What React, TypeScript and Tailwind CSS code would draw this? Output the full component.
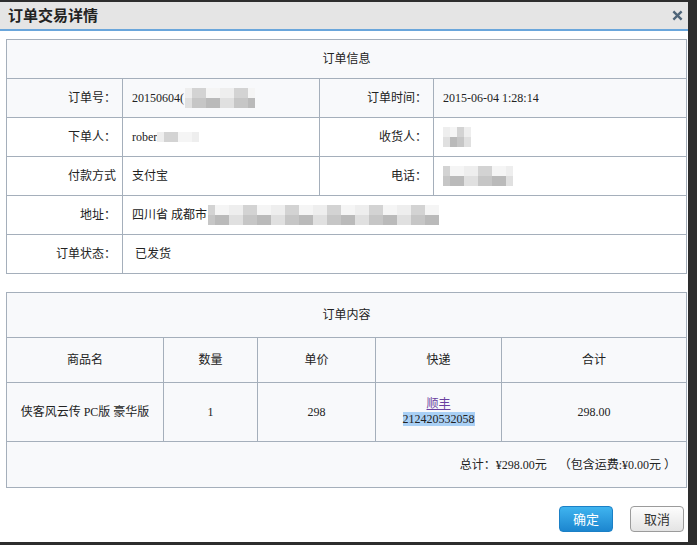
import React from "react";

const SHADES = [
  "bg-[#eeeeee]",
  "bg-[#e0e0e0]",
  "bg-[#d3d3d3]",
  "bg-[#c6c6c6]",
  "bg-[#f5f5f5]",
  "bg-[#bababa]",
];

type MosaicProps = { cols: number; rows: number; seed: number };

// pixelated blur used to hide personal data
const Mosaic = ({ cols, rows, seed }: MosaicProps) => (
  <span className="inline-flex flex-col align-middle">
    {Array.from({ length: rows }).map((_, r) => (
      <span key={r} className="flex">
        {Array.from({ length: cols }).map((__, c) => {
          const idx = (c * 7 + r * 3 + seed * 5 + ((c * c + seed) % 4)) % SHADES.length;
          const shade = r === rows - 1 && rows > 1 ? SHADES[(idx + 4) % SHADES.length] : SHADES[idx];
          return <span key={c} className={`h-[10px] w-[7px] ${shade}`} />;
        })}
      </span>
    ))}
  </span>
);

const cell = "border border-[#a5afbb] text-[12px] text-[#222]";
const label = `${cell} text-right pr-[6px]`;
const value = `${cell} text-left pl-[9px]`;

const InfoTable = () => (
  <table className="w-[680px] table-fixed border-collapse">
    <colgroup>
      <col className="w-[116px]" />
      <col className="w-[197px]" />
      <col className="w-[114px]" />
      <col className="w-[253px]" />
    </colgroup>
    <tbody>
      <tr className="h-[39px] bg-[#f8f9fb]">
        <td colSpan={4} className={`${cell} text-center`}>订单信息</td>
      </tr>
      <tr className="h-[39px] bg-[#f8f9fb]">
        <td className={label}>订单号：</td>
        <td className={value}>
          <span className="inline-flex items-center">
            20150604(
            <span className="ml-[1px]"><Mosaic cols={10} rows={2} seed={1} /></span>
          </span>
        </td>
        <td className={label}>订单时间：</td>
        <td className={value}>2015-06-04 1:28:14</td>
      </tr>
      <tr className="h-[39px] bg-white">
        <td className={label}>下单人：</td>
        <td className={value}>
          <span className="inline-flex items-center">
            rober
            <Mosaic cols={6} rows={1} seed={2} />
          </span>
        </td>
        <td className={label}>收货人：</td>
        <td className={value}>
          <Mosaic cols={4} rows={2} seed={3} />
        </td>
      </tr>
      <tr className="h-[39px] bg-white">
        <td className={label}>付款方式</td>
        <td className={value}>支付宝</td>
        <td className={label}>电话：</td>
        <td className={value}>
          <Mosaic cols={10} rows={2} seed={4} />
        </td>
      </tr>
      <tr className="h-[39px] bg-white">
        <td className={label}>地址：</td>
        <td colSpan={3} className={value}>
          <span className="inline-flex items-center">
            四川省 成都市
            <span className="ml-[1px]"><Mosaic cols={33} rows={2} seed={5} /></span>
          </span>
        </td>
      </tr>
      <tr className="h-[39px] bg-white">
        <td className={label}>订单状态：</td>
        <td colSpan={3} className={`${value} pl-[12px]`}>已发货</td>
      </tr>
    </tbody>
  </table>
);

const ContentTable = () => (
  <table className="w-[680px] table-fixed border-collapse bg-[#f8f9fb]">
    <colgroup>
      <col className="w-[157px]" />
      <col className="w-[94px]" />
      <col className="w-[118px]" />
      <col className="w-[126px]" />
      <col className="w-[185px]" />
    </colgroup>
    <tbody>
      <tr className="h-[45px]">
        <td colSpan={5} className={`${cell} text-center`}>订单内容</td>
      </tr>
      <tr className="h-[45px] text-center">
        <td className={cell}>商品名</td>
        <td className={cell}>数量</td>
        <td className={cell}>单价</td>
        <td className={cell}>快递</td>
        <td className={cell}>合计</td>
      </tr>
      <tr className="h-[59px] text-center">
        <td className={cell}>侠客风云传 PC版 豪华版</td>
        <td className={cell}>1</td>
        <td className={cell}>298</td>
        <td className={`${cell} leading-[15px]`}>
          <a href="#" className="text-[#6b3fa0] underline">顺丰</a>
          <br />
          <span className="bg-[#a9d0f5]">212420532058</span>
        </td>
        <td className={cell}>298.00</td>
      </tr>
      <tr className="h-[46px]">
        <td colSpan={5} className={`${cell} pr-[10px] text-right`}>
          总计：¥298.00元 &nbsp;&nbsp;&nbsp;（包含运费:¥0.00元 ）
        </td>
      </tr>
    </tbody>
  </table>
);

export default function App() {
  return (
    <div
      className="h-[545px] w-[697px] overflow-hidden bg-[#2d2d2d] pt-[2px] pr-[9px]"
      style={{ fontFamily: '"Liberation Serif", "Noto Sans CJK SC", serif' }}
    >
      <div className="flex h-[540px] flex-col bg-white">
        <div className="flex h-[29px] items-center justify-between border-b-2 border-[#6aa6db] bg-[#e5e5e5] pl-[8px] pr-[5px]">
          <h1 className="font-['Noto_Sans_CJK_SC',sans-serif] text-[15px] font-bold text-[#222]">订单交易详情</h1>
          <svg viewBox="0 0 12 12" className="h-[11px] w-[11px]" fill="none" stroke="#4f6579" strokeWidth={2.6} strokeLinecap="butt">
            <path d="M1.5 1.5 10.5 10.5M10.5 1.5 1.5 10.5" />
          </svg>
        </div>

        <div className="ml-[6px] mt-[8px]">
          <InfoTable />
        </div>

        <div className="ml-[6px] mt-[18px]">
          <ContentTable />
        </div>

        <div className="mt-[18px] flex justify-end gap-[17px] pr-[4px] font-['Noto_Sans_CJK_SC',sans-serif] text-[13px]">
          <button
            type="button"
            className="h-[26px] w-[54px] rounded-[4px] border border-[#1b80c6] bg-gradient-to-b from-[#3fb4ef] to-[#1c86cf] text-white"
          >
            确定
          </button>
          <button
            type="button"
            className="h-[26px] w-[54px] rounded-[4px] border border-[#9b9b9b] bg-gradient-to-b from-[#fdfdfd] to-[#e4e4e4] text-[#333]"
          >
            取消
          </button>
        </div>
      </div>
    </div>
  );
}
